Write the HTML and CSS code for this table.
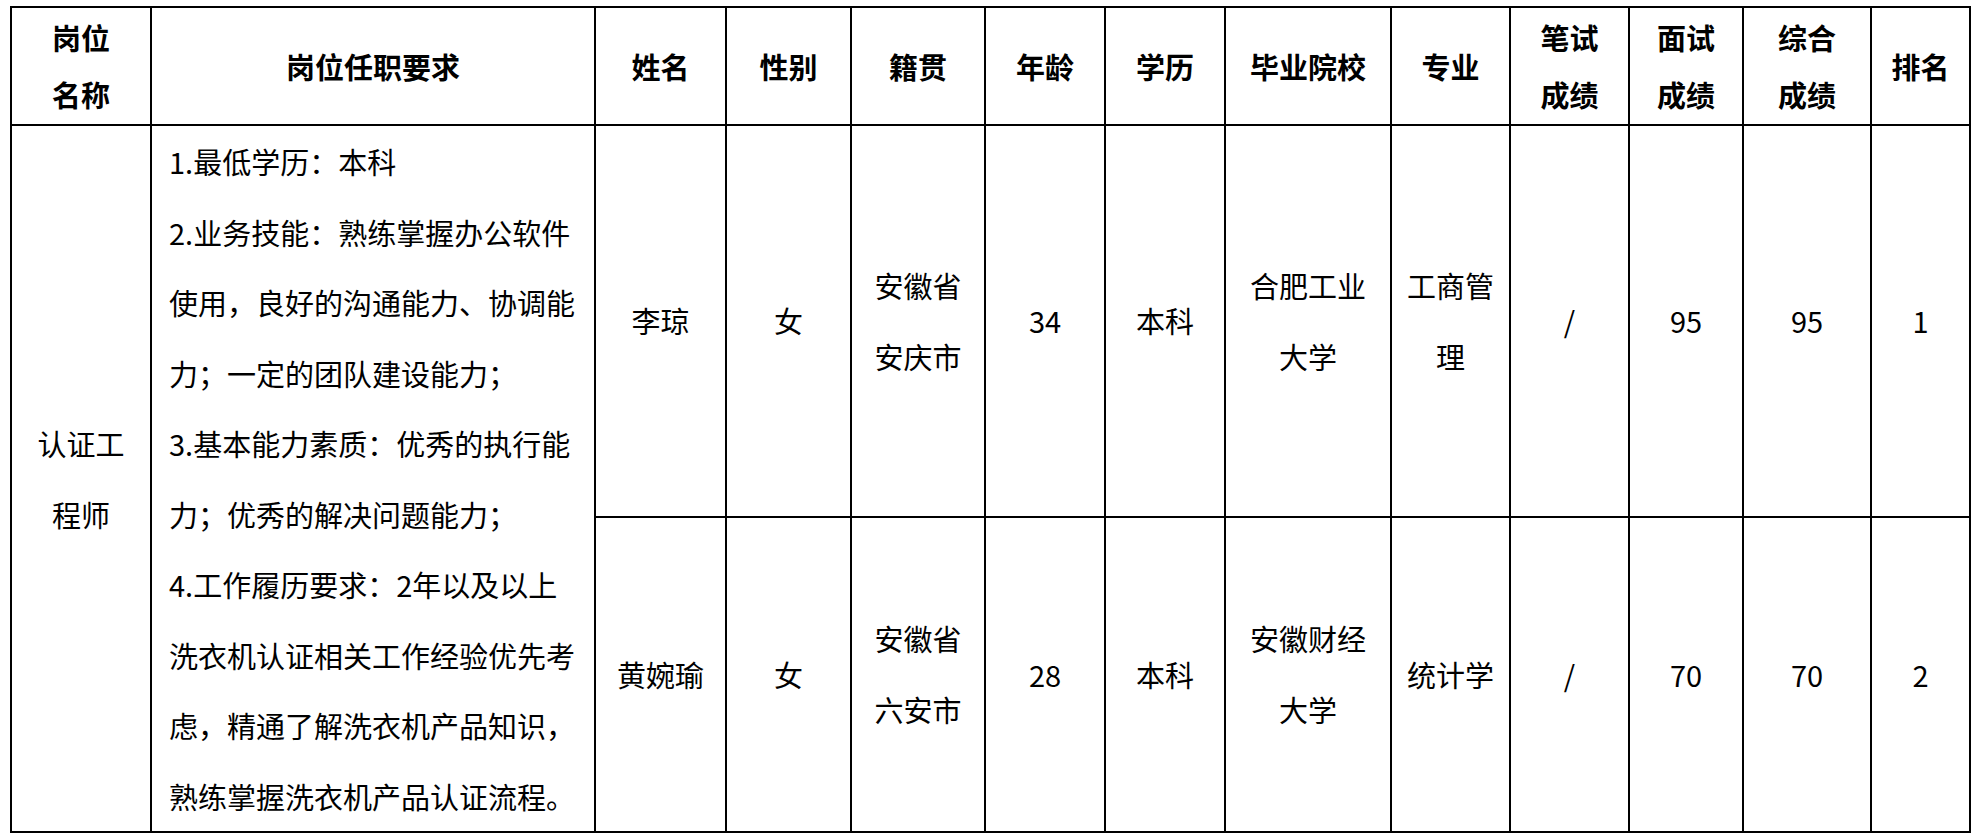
FILE: index.html
```html
<!DOCTYPE html>
<html lang="zh-CN">
<head>
<meta charset="utf-8">
<title>招聘结果</title>
<link rel="stylesheet" href="styles.css">
</head>
<body>
<table class="grid">
  <colgroup>
    <col class="c-post">
    <col class="c-req">
    <col class="c-name">
    <col class="c-sex">
    <col class="c-origin">
    <col class="c-age">
    <col class="c-edu">
    <col class="c-school">
    <col class="c-major">
    <col class="c-written">
    <col class="c-interview">
    <col class="c-total">
    <col class="c-rank">
  </colgroup>
  <thead>
    <tr class="head-row">
      <th>岗位<br>名称</th>
      <th>岗位任职要求</th>
      <th>姓名</th>
      <th>性别</th>
      <th>籍贯</th>
      <th>年龄</th>
      <th>学历</th>
      <th>毕业院校</th>
      <th>专业</th>
      <th>笔试<br>成绩</th>
      <th>面试<br>成绩</th>
      <th>综合<br>成绩</th>
      <th>排名</th>
    </tr>
  </thead>
  <tbody>
    <tr class="row-one">
      <td rowspan="2">认证工<br>程师</td>
      <td rowspan="2" class="req">
        <div class="req-line">1.最低学历：本科</div>
        <div class="req-line">2.业务技能：熟练掌握办公软件</div>
        <div class="req-line">使用，良好的沟通能力、协调能</div>
        <div class="req-line">力；一定的团队建设能力；</div>
        <div class="req-line">3.基本能力素质：优秀的执行能</div>
        <div class="req-line">力；优秀的解决问题能力；</div>
        <div class="req-line">4.工作履历要求：2年以及以上</div>
        <div class="req-line">洗衣机认证相关工作经验优先考</div>
        <div class="req-line">虑，精通了解洗衣机产品知识，</div>
        <div class="req-line">熟练掌握洗衣机产品认证流程。</div>
      </td>
      <td>李琼</td>
      <td>女</td>
      <td>安徽省<br>安庆市</td>
      <td>34</td>
      <td>本科</td>
      <td>合肥工业<br>大学</td>
      <td>工商管<br>理</td>
      <td>/</td>
      <td>95</td>
      <td>95</td>
      <td>1</td>
    </tr>
    <tr class="row-two">
      <td>黄婉瑜</td>
      <td>女</td>
      <td>安徽省<br>六安市</td>
      <td>28</td>
      <td>本科</td>
      <td>安徽财经<br>大学</td>
      <td>统计学</td>
      <td>/</td>
      <td>70</td>
      <td>70</td>
      <td>2</td>
    </tr>
  </tbody>
</table>
</body>
</html>
```

FILE: styles.css
```css
html, body {
  margin: 0;
  padding: 0;
  background: #ffffff;
}

body {
  padding: 6px 0 0 10px;
  font-family: "Noto Sans CJK SC", "Noto Sans", sans-serif;
  color: #000000;
}

.grid {
  border-collapse: collapse;
  table-layout: fixed;
  width: 1960px;
  border: 2px solid #000;
}

.grid th,
.grid td {
  border: 2px solid #000;
  padding: 0 4px;
  text-align: center;
  vertical-align: middle;
  font-size: 29px;
}

.grid th {
  font-weight: 700;
  line-height: 57px;
}

.grid td {
  font-weight: 400;
  line-height: 71px;
}

.head-row { height: 118px; }
.row-one { height: 391px; }
.row-two { height: 315px; }

.grid td.req {
  text-align: left;
  padding: 0 0 0 17px;
  line-height: 70.5px;
}

.req-line {
  white-space: nowrap;
}

.c-post { width: 140px; }
.c-req { width: 444px; }
.c-name { width: 131px; }
.c-sex { width: 125px; }
.c-origin { width: 134px; }
.c-age { width: 120px; }
.c-edu { width: 120px; }
.c-school { width: 166px; }
.c-major { width: 119px; }
.c-written { width: 119px; }
.c-interview { width: 114px; }
.c-total { width: 128px; }
.c-rank { width: 99px; }
```
